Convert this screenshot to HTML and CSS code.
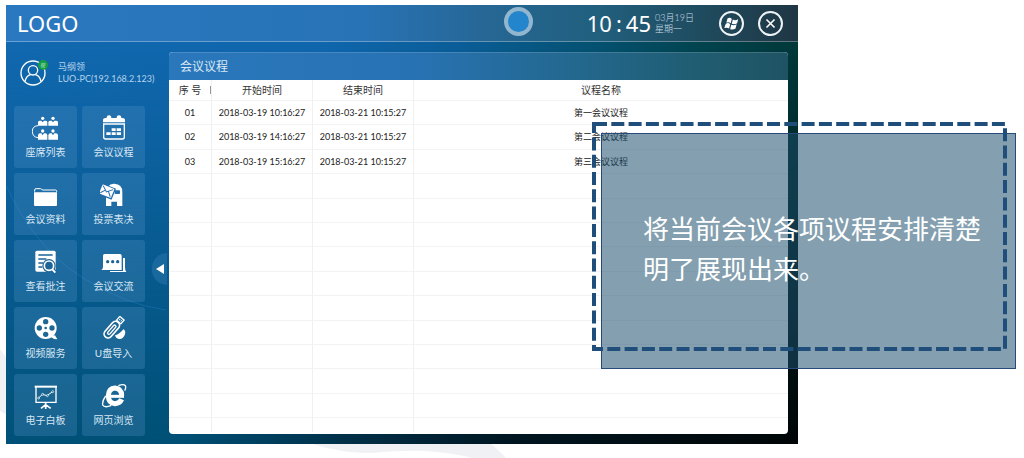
FILE: index.html
```html
<!DOCTYPE html>
<html lang="zh-CN">
<head>
<meta charset="utf-8">
<title>会议议程</title>
<link rel="stylesheet" href="styles.css">
</head>
<body>
<main class="slide">
  <svg class="slide-curves" width="520" height="458" viewBox="0 0 520 458" aria-hidden="true">
    <path d="M0 349Q6 356 9 364V416Q4 413 0 411Z"/>
    <path d="M300 440Q340 454 372 453Q400 450 425 451Q455 453 472 458H506Q499 450 486 440Z"/>
  </svg>

  <div class="app">
    <header class="topbar">
      <div class="logo">LOGO</div>
      <div class="orb"></div>
      <div class="clock"><span>10</span><span>:</span><span>45</span></div>
      <div class="date"><span>03月19日</span><span>星期一</span></div>
      <div class="actions">
        <button class="round" aria-label="开始">
          <svg viewBox="0 0 39 39"><g fill="#fff"><path d="M12 10Q17 7 20 11L18 19Q14 16 10 18Z"/><path d="M22 12Q27 15 32 11L30 19Q25 22 20 20Z"/><path d="M9 20Q14 17 17 21L15 29Q11 26 6 28Z"/><path d="M19 22Q24 24 29 21L27 29Q22 32 17 30Z"/></g></svg>
        </button>
        <button class="round" aria-label="关闭">
          <svg viewBox="0 0 39 39"><path d="M12 12L27 27M27 12L12 27" stroke="#fff" stroke-width="3" fill="none"/></svg>
        </button>
      </div>
    </header>

    <div class="body">
      <svg class="orbit" width="160" height="320" viewBox="0 0 160 320" aria-hidden="true"><path d="M0 143Q28 205 77 236Q120 263 160 268"/></svg>
      <aside class="sidebar">
        <div class="user">
          <div class="avatar">
            <svg viewBox="0 0 78 78" fill="none" stroke="#fff" stroke-width="4"><circle cx="39" cy="39" r="36"/><circle cx="39" cy="31" r="14"/><path d="M15 65Q19 46 32 44M46 44Q59 46 63 65"/></svg>
            <span class="badge">帮</span>
          </div>
          <div class="user-text"><span>马纲领</span><span>LUO-PC(192.168.2.123)</span></div>
        </div>

        <nav class="tiles">
          <button class="tile"><svg viewBox="0 0 81 81"><g fill="#fff"><circle cx="32" cy="10" r="5"/><circle cx="63" cy="10" r="5"/><path d="M18 32V21Q19 17 24 17H28L32 22L36 17H40Q45 17 46 21V32ZM49 32V21Q50 17 55 17H59L63 22L67 17H72Q77 17 78 21V32Z"/><circle cx="32" cy="48" r="5"/><circle cx="63" cy="48" r="5"/><path d="M18 74V60Q19 55 24 55H28L32 61L36 55H40Q45 55 46 60V74ZM49 74V60Q50 55 55 55H59L63 61L67 55H72Q77 55 78 60V74Z"/></g><path d="M18 32Q1 33 1 49Q1 66 18 68" fill="none" stroke="#fff" stroke-width="3"/></svg>座席列表</button>
          <button class="tile"><svg viewBox="0 0 81 81"><g fill="#fff"><path d="M9 22V16Q9 9 17 9H20Q20 1 27 1T34 9H50Q50 1 57 1T64 9H67Q75 9 75 16V22Z"/><path d="M35 40h12v8h-12zM50 40h13v8h-13zM19 52h13v8h-13zM35 52h12v8h-12zM50 52h13v8h-13z"/></g><path d="M11 27H73V66Q73 72 67 72H17Q11 72 11 66Z" fill="none" stroke="#fff" stroke-width="4"/></svg>会议议程</button>
          <button class="tile"><svg viewBox="0 0 81 81"><path d="M8 29V24Q8 20 12 20H25Q29 20 31 24H71Q74 24 74 28V30" fill="none" stroke="#fff" stroke-width="3"/><path d="M6 31H75V69Q75 72 72 72H9Q6 72 6 69Z" fill="#fff"/></svg>会议资料</button>
          <button class="tile"><svg viewBox="0 0 81 81"><path d="M24 14Q31 4 43 5Q67 6 67 30V72H51V59H34V72H18V48Z" fill="#fff"/><rect x="44" y="25" width="16" height="11" rx="2" fill="#236eaf"/><g transform="rotate(22 20 28)"><rect x="-3" y="10" width="46" height="36" fill="#236eaf"/><rect x="1" y="13" width="38" height="29" rx="2" fill="#fff"/><path d="M4 16L20 30L36 16M4 39L15 26M36 39L25 26" fill="none" stroke="#236eaf" stroke-width="3"/></g></svg>投票表决</button>
          <button class="tile"><svg viewBox="0 0 81 81"><path d="M15 5H66Q71 5 71 10V68H15Q10 68 10 63V10Q10 5 15 5Z" fill="#fff"/><path d="M19 18H62M19 30H43M19 42H33M19 54H31" stroke="#1d6499" stroke-width="4"/><circle cx="51" cy="50" r="20" fill="#1d6499"/><path d="M62 62L72 73" stroke="#1d6499" stroke-width="13"/><circle cx="51" cy="50" r="14" fill="#1d6499" stroke="#fff" stroke-width="5"/><path d="M61 61L70 71" stroke="#fff" stroke-width="6"/></svg>查看批注</button>
          <button class="tile"><svg viewBox="0 0 81 81"><path d="M14 15H60Q65 15 65 20V63H4Q9 60 9 54V20Q9 15 14 15Z" fill="#fff"/><path d="M69 27H75V56Q75 64 79 69H30V66H69Z" fill="#fff"/><g fill="#1d6499"><circle cx="23" cy="38" r="5"/><circle cx="38" cy="38" r="5"/><circle cx="53" cy="38" r="5"/></g></svg>会议交流</button>
          <button class="tile"><svg viewBox="0 0 81 81"><circle cx="41" cy="36" r="33" fill="#fff"/><path d="M54 61L69 58L76 70L66 69Z" fill="#fff"/><g fill="#1d6695"><circle cx="41" cy="17" r="8"/><circle cx="41" cy="55" r="8"/><circle cx="22" cy="36" r="8"/><circle cx="60" cy="36" r="8"/><circle cx="41" cy="36" r="4"/></g></svg>视频服务</button>
          <button class="tile"><svg viewBox="0 0 81 81"><path d="M45 58Q60 54 70 40Q78 44 75 55Q70 70 57 69Q47 67 45 58Z" fill="#fff"/><g transform="rotate(41 38 38)" fill="none" stroke="#fff"><rect x="26" y="13" width="24" height="58" rx="12" stroke-width="5" fill="#1d6695"/><rect x="34" y="25" width="8" height="34" rx="4" stroke-width="4"/><path d="M30 11V-4H47V11Z" stroke-width="4"/><path d="M36 1v5M42 1v5" stroke-width="3"/></g></svg>U盘导入</button>
          <button class="tile"><svg viewBox="0 0 81 81" fill="none" stroke="#fff"><path d="M8 11H75" stroke-width="6"/><path d="M12 12V58H72V12" stroke-width="4"/><path d="M19 46L31 34L45 38L63 25" stroke-width="3"/><g fill="#1d6390" stroke-width="2"><circle cx="20" cy="45" r="3"/><circle cx="32" cy="34" r="3"/><circle cx="46" cy="38" r="3"/><circle cx="62" cy="26" r="3"/></g><path d="M41 60V78M41 65L27 76M41 65L56 76" stroke-width="5"/></svg>电子白板</button>
          <button class="tile"><svg viewBox="0 0 81 81" fill="none" stroke="#fff"><path d="M65 49Q60 61 45 62Q25 60 25 38Q26 16 45 15Q65 17 65 38" stroke-width="15"/><path d="M30 40H72" stroke-width="9"/><path d="M55 8Q71 2 76 8Q79 14 74 23M17 39Q6 54 8 66Q14 76 34 67" stroke-width="4"/></svg>网页浏览</button>
        </nav>
        <button class="collapse" aria-label="收起"><svg viewBox="0 0 8 10"><path d="M8 0V10L0 5Z" fill="#fff"/></svg></button>
      </aside>

      <section class="panel">
        <h1 class="panel-title">会议议程</h1>
        <table class="agenda">
          <colgroup><col class="col-no"><col class="col-time"><col class="col-time"><col></colgroup>
          <thead><tr><th class="no">序 号</th><th>开始时间</th><th>结束时间</th><th>议程名称</th></tr></thead>
          <tbody>
            <tr><td>01</td><td>2018-03-19 10:16:27</td><td>2018-03-21 10:15:27</td><td>第一会议议程</td></tr>
            <tr><td>02</td><td>2018-03-19 14:16:27</td><td>2018-03-21 10:15:27</td><td>第二会议议程</td></tr>
            <tr><td>03</td><td>2018-03-19 15:16:27</td><td>2018-03-21 10:15:27</td><td>第三会议议程</td></tr>
            <tr><td></td><td></td><td></td><td></td></tr>
            <tr><td></td><td></td><td></td><td></td></tr>
            <tr><td></td><td></td><td></td><td></td></tr>
            <tr><td></td><td></td><td></td><td></td></tr>
            <tr><td></td><td></td><td></td><td></td></tr>
            <tr><td></td><td></td><td></td><td></td></tr>
            <tr><td></td><td></td><td></td><td></td></tr>
            <tr><td></td><td></td><td></td><td></td></tr>
            <tr><td></td><td></td><td></td><td></td></tr>
            <tr><td></td><td></td><td></td><td></td></tr>
          </tbody>
          <tfoot><tr><td></td><td></td><td></td><td></td></tr></tfoot>
        </table>
      </section>
    </div>
  </div>

  <div class="callout">
    <p>将当前会议各项议程安排清楚明了展现出来。</p>
    <svg class="dashes" width="416" height="230" viewBox="0 0 416 230" aria-hidden="true"><rect x="2" y="2" width="411" height="225"/></svg>
  </div>
</main>
</body>
</html>
```
FILE: styles.css
```css
* { box-sizing: border-box; }

body {
  margin: 0;
  background: #fff;
  font-family: Lato, "Noto Sans CJK SC", sans-serif;
  font-size: 9px;
}

button {
  padding: 0;
  border: 0;
  background: none;
  color: inherit;
  font: inherit;
  cursor: pointer;
}

.slide {
  position: relative;
  min-height: 100vh;
  padding: 5px 226px 14px 6px;
  overflow: hidden;
}

.slide-curves {
  position: absolute;
  left: 0;
  top: 0;
  fill: #f0f1f4;
}

.app {
  position: relative;
  isolation: isolate;
  color: #fff;
  background: linear-gradient(90deg, #1168af 0%, #0f66ac 40%, #0a5d98 57%, #04506f 75%, #02434d 88%, #01383a 100%);
}

.app::before {
  content: "";
  position: absolute;
  inset: 0;
  z-index: -1;
  background: linear-gradient(90deg, #005178 0%, #005075 22%, #003048 42%, #00141e 65%, #000506 100%);
  -webkit-mask-image: linear-gradient(#0000 10%, #000 100%);
  mask-image: linear-gradient(#0000 10%, #000 100%);
}

.topbar {
  display: flex;
  align-items: center;
  height: 37px;
  padding: 0 15px 0 11px;
  border-bottom: 1px solid rgba(255, 255, 255, .3);
  background: linear-gradient(90deg, #2a78c0 0%, #2873b6 45%, #266796 60%, #215f7d 75%, #1f4b5e 88%, #1f3644 100%);
}

.logo {
  margin-right: auto;
  font: 22px/36px "Noto Sans", sans-serif;
}

.orb {
  width: 29px;
  height: 29px;
  margin-bottom: 4px;
  border: 4px solid #93b6cf;
  border-radius: 50%;
  background: #2385cc;
}

.clock {
  display: flex;
  gap: 4px;
  margin-left: 54px;
  font: 22px/36px "Noto Sans", sans-serif;
}

.date {
  display: flex;
  flex-direction: column;
  width: 64px;
  margin-left: 4px;
  font-weight: 300;
  line-height: 11px;
  color: #d3dfe7;
}

.actions {
  display: flex;
  gap: 14px;
}

.round {
  width: 25px;
  height: 25px;
  border: 2px solid #eef3f6;
  border-radius: 50%;
}

.round svg { display: block; width: 100%; }

.body {
  position: relative;
  display: flex;
  padding: 10px 10px 8px 8px;
}

.orbit {
  position: absolute;
  left: 0;
  top: 0;
  fill: none;
  stroke: rgba(60, 150, 235, .25);
}

.sidebar {
  position: relative;
  flex: none;
  width: 155px;
}

.user {
  display: flex;
  align-items: center;
  gap: 12px;
  height: 54px;
  padding: 0 0 12px 6px;
}

.avatar {
  position: relative;
  width: 26px;
  height: 26px;
}

.avatar svg { display: block; }

.badge {
  position: absolute;
  right: -2px;
  top: 0;
  width: 10px;
  height: 10px;
  border-radius: 50%;
  background: #159c46;
  color: #bfe6cc;
  font-size: 5px;
  line-height: 10px;
  text-align: center;
}

.user-text {
  display: flex;
  flex-direction: column;
  line-height: 12px;
  color: #b5d3ec;
  white-space: nowrap;
}

.tiles {
  display: grid;
  grid-template-columns: 63px 63px;
  gap: 5px;
}

.tile {
  display: flex;
  flex-direction: column;
  align-items: center;
  gap: 3px;
  height: 62px;
  padding-top: 9px;
  border-radius: 3px;
  background: rgba(92, 150, 205, .27);
  color: #d8e7f3;
  font-size: 10px;
  line-height: 14px;
}

.tile svg {
  display: block;
  width: 27px;
  height: 27px;
}

.collapse {
  position: absolute;
  right: 2px;
  top: 201px;
  width: 15px;
  height: 32px;
  padding-left: 4px;
  border-radius: 16px 0 0 16px;
  background: rgba(70, 140, 195, .3);
}

.collapse svg { display: block; width: 8px; }

.panel {
  flex: 1;
  min-width: 0;
  margin-bottom: 2px;
  overflow: hidden;
  border-radius: 4px;
  background: #fff;
}

.panel-title {
  height: 28px;
  margin: 0;
  padding-left: 11px;
  border-top: 1px solid rgba(255, 255, 255, .15);
  background: linear-gradient(90deg, #2a77bc 0%, #2772b3 40%, #23688f 65%, #205d72 85%, #1f5363 100%);
  color: #dceaf5;
  font-size: 12px;
  font-weight: 400;
  line-height: 27px;
}

.agenda {
  width: 100%;
  border-collapse: separate;
  border-spacing: 0;
  table-layout: fixed;
  color: #222;
}

.col-no { width: 43px; }
.col-time { width: 101px; }

.agenda th,
.agenda td {
  height: 24px;
  padding: 0;
  border-right: 1px solid #f0f0f0;
  border-bottom: 1px solid #f3f3f3;
  text-align: center;
  line-height: 14px;
  white-space: nowrap;
}

.agenda th {
  height: 21px;
  color: #333;
  font-size: 10px;
  font-weight: 400;
}

.agenda .no {
  background: linear-gradient(#999, #999) 100% 50% / 1px 8px no-repeat;
}

.agenda th:last-child,
.agenda td:last-child { border-right: 0; }

.agenda tbody tr:nth-child(5n + 2) td,
.agenda tbody tr:nth-child(5n + 4) td { height: 25px; }

.agenda tfoot td {
  height: 14px;
  border-bottom: 0;
}

.callout {
  position: absolute;
  right: 8px;
  top: 133px;
  width: 415px;
  padding: 74px 30px 80px 41px;
  border: 1px solid #29497a;
  background: rgba(27, 77, 108, .54);
  color: #fff;
}

.callout p {
  margin: 0;
  font-family: "Noto Sans CJK SC", sans-serif;
  font-size: 26px;
  line-height: 40px;
}

.dashes {
  position: absolute;
  left: -10px;
  top: -12px;
  fill: none;
  stroke: #1f4e7a;
  stroke-width: 4px;
  stroke-dasharray: 13 4.3;
}
```
